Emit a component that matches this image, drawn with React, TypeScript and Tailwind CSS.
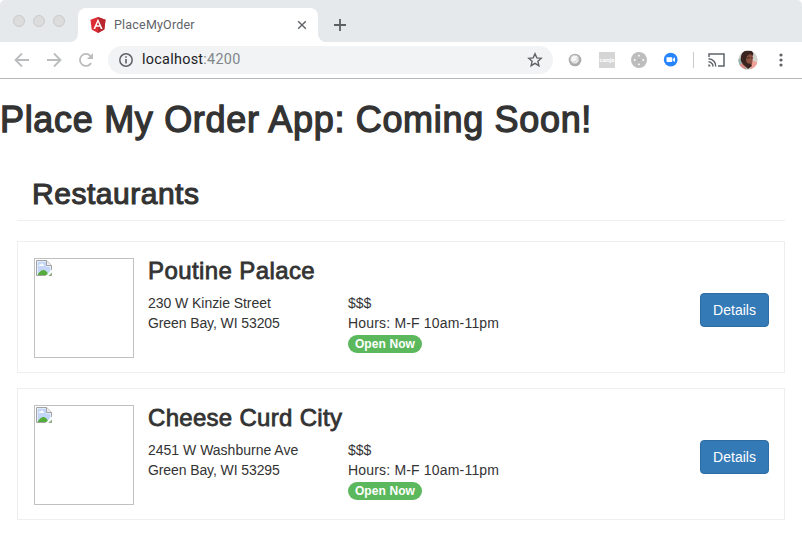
import React from "react";

type Restaurant = { name: string; street: string; city: string; nameTracking: string; streetTracking: string };

const restaurants: Restaurant[] = [
  { name: "Poutine Palace", street: "230 W Kinzie Street", city: "Green Bay, WI 53205", nameTracking: "tracking-[0.4px]", streetTracking: "tracking-[-0.05px]" },
  { name: "Cheese Curd City", street: "2451 W Washburne Ave", city: "Green Bay, WI 53295", nameTracking: "tracking-[0.3px]", streetTracking: "tracking-[0px]" },
];

function AngularLogo() {
  return (
    <svg width="16" height="18" viewBox="0 0 16 18" className="shrink-0">
      <path d="M8 1 15.5 3.7 14.3 13.5 8 17 1.7 13.5.5 3.7Z" fill="#dd2c35" />
      <path d="M8 1 15.5 3.7 14.3 13.5 8 17Z" fill="#b9262e" />
      <path d="M8 2.8 3.4 13h1.8l.9-2.3h3.8l.9 2.3h1.8ZM8 6.1l1.3 3.1H6.7Z" fill="#fff" fillRule="evenodd" />
    </svg>
  );
}

function BrokenImage() {
  return (
    <svg width="16" height="16" viewBox="0 0 16 16">
      <path d="M.5.5h10.2l4.8 4.8v10.2H.5Z" fill="#fff" stroke="#a3a3a3" />
      <path d="M1.5 1.5h8.7v5h4.3v8h-13Z" fill="#c4d6f8" />
      <path d="M3 6c-.4-1.2.8-1.9 1.6-1.3.5-1.6 2.7-1.3 2.8.1 1 0 1.1 1.2.3 1.2Z" fill="#fff" />
      <path d="M1.5 15c1.8-3.5 4.5-5.2 6.3-5 1.8.2 3.6 2 4.7 5Z" fill="#54ad3b" />
      <path d="M10.5.5v5h5" fill="#eee" stroke="#a3a3a3" />
      <path d="M16 9.6 9.4 16h2.9l3.7-3.6Z" fill="#fff" />
      <path d="M12.6 15.5h2.9v-2.7Z" fill="#54ad3b" opacity="0.55" />
    </svg>
  );
}

function BrowserChrome() {
  return (
    <header className="font-[Roboto,sans-serif]">
      <div className="flex h-[42px] overflow-hidden rounded-t-[5px] bg-[#e5e9ec]">
        <div className="flex w-[78px] shrink-0 gap-2 pl-[13px] pt-[15px]">
          <i className="size-3 rounded-full border border-[#c8cacb] bg-[#dcdcdc]" />
          <i className="size-3 rounded-full border border-[#c8cacb] bg-[#dcdcdc]" />
          <i className="size-3 rounded-full border border-[#c8cacb] bg-[#dcdcdc]" />
        </div>
        <div className="relative mt-2 flex h-[34px] w-60 items-center rounded-t-lg bg-white pl-3 pr-[11px]">
          <svg className="absolute -left-2 bottom-0" width="8" height="8"><path d="M8 0v8H0a8 8 0 0 0 8-8" fill="#fff" /></svg>
          <svg className="absolute -right-2 bottom-0" width="8" height="8"><path d="M0 0v8h8a8 8 0 0 1-8-8" fill="#fff" /></svg>
          <AngularLogo />
          <span className="ml-2 flex-1 text-[12.5px] leading-4 tracking-[0.2px] text-[#5f6368]">PlaceMyOrder</span>
          <svg width="10" height="10" viewBox="0 0 10 10"><path d="m1.2 1.2 7.6 7.6M8.8 1.2 1.2 8.8" stroke="#5f6368" strokeWidth="1.4" /></svg>
        </div>
        <svg className="ml-[15px] mt-[18px]" width="14" height="14"><path d="M7 1v12M1 7h12" stroke="#5b5f63" strokeWidth="1.8" /></svg>
      </div>
      <div className="flex h-[37px] items-center border-b border-[#b5b6b8] bg-white pl-[14px] pr-[13px]">
        <svg width="16" height="16" fill="none" stroke="#babcbe" strokeWidth="1.8"><path d="M15 8H2M8 1.5 1.5 8 8 14.5" /></svg>
        <svg className="ml-4" width="16" height="16" fill="none" stroke="#babcbe" strokeWidth="1.8"><path d="M1 8h13M8 1.5 14.5 8 8 14.5" /></svg>
        <svg className="ml-4" width="16" height="16"><path d="M13.1 11A6 6 0 1 1 12.3 3.8" fill="none" stroke="#babcbe" strokeWidth="1.8" /><path d="M15 1v6H9Z" fill="#babcbe" /></svg>
        <div className="ml-[14px] flex h-7 w-[445px] items-center rounded-full bg-[#f1f3f4] pl-[11px] pr-[10px]">
          <svg width="14" height="14" fill="none" stroke="#5f6368"><circle cx="7" cy="7" r="6.2" strokeWidth="1.5" /><path d="M7 6v4.5M7 3.2v1.6" strokeWidth="1.6" /></svg>
          <span className="ml-[9px] flex-1 text-[14.4px] leading-5 tracking-[0.28px] text-[#202124]">localhost<span className="text-[#80868b]">:4200</span></span>
          <svg width="16" height="16" viewBox="0 0 16 16"><path d="m8 1.8 1.8 4.1 4.4.4-3.3 3 1 4.4L8 11.4l-3.9 2.3 1-4.4-3.3-3 4.4-.4Z" fill="none" stroke="#5f6368" strokeWidth="1.4" /></svg>
        </div>
        <svg className="ml-[15px]" width="14" height="14"><circle cx="7" cy="7" r="6.3" fill="#aaa" /><circle cx="6.7" cy="6.3" r="4.2" fill="#f6f6f6" stroke="#c9c9c9" /><path d="M8.8 4.5 9.8 6 7 9H4.8" fill="none" stroke="#d0d0d0" /></svg>
        <span className="ml-[17px] flex size-4 items-center justify-center bg-[#d5d5d5] pb-px font-['Open_Sans',sans-serif] text-[6px] font-bold leading-none tracking-[-0.1px] text-white">canjs</span>
        <svg className="ml-4" width="16" height="16"><circle cx="8" cy="8" r="8" fill="#bdbdbd" /><g fill="#fff"><circle cx="8" cy="3.7" r=".9" /><circle cx="8" cy="12.3" r=".9" /><circle cx="3.7" cy="8" r=".9" /><circle cx="12.3" cy="8" r=".9" /></g><circle cx="8" cy="8" r="1.2" fill="#b2b2b2" /></svg>
        <svg className="ml-4" width="16" height="16"><circle cx="7.7" cy="7.7" r="6.9" fill="#2685fc" /><path d="M3.5 5.2h5.7v4.9H4.5q-1 0-1-1Zm6.3 1.7 2.2-1.6v4.8L9.8 8.6Z" fill="#fff" /></svg>
        <i className="ml-[14px] h-4 w-px bg-[#c8cacc]" />
        <svg className="ml-[14px]" width="17" height="14" fill="none" stroke="#5f6368" strokeWidth="1.5"><path d="M1 4V1h15v12h-6M.5 5.8A7.2 7.2 0 0 1 7.7 13.5M.5 8.8A4.5 4.5 0 0 1 5 13.5" /><path d="M.3 11.2A2.3 2.3 0 0 1 2.6 13.5H.3Z" fill="#5f6368" stroke="none" /></svg>
        <svg className="ml-[13px]" width="20" height="20" viewBox="0 0 20 20">
          <clipPath id="avatar"><circle cx="10" cy="10" r="9.7" /></clipPath>
          <g clipPath="url(#avatar)"><path d="M0 0h20v20H0Z" fill="#d4d2cd" /><path d="M0 9 5 8l4 12H0Z" fill="#93b5ad" /><path d="m14 10 6 3v7h-8Z" fill="#f0a19a" /><path d="m1 15 5-3 2 8H2Z" fill="#d88984" /><path d="M5 4 12 2l3 5-1 7-4 4-5-3-2-5Z" fill="#8a5140" /><path d="M3 11C2 5 5 0 10 1c4-1 6 1 5 5L12 4 9 6l-1 4 1 3 4 1 1 2-4 3-5-5Z" fill="#3a241f" /><path d="m9 8 3-.5m1 .5h1.5" stroke="#4b2922" /></g>
        </svg>
        <svg className="ml-5" width="6" height="16" fill="#5f6368"><circle cx="3" cy="3" r="1.6" /><circle cx="3" cy="8" r="1.6" /><circle cx="3" cy="13" r="1.6" /></svg>
      </div>
    </header>
  );
}

function RestaurantCard({ r }: { r: Restaurant }) {
  return (
    <article className="flex h-[132px] border border-[#eee] pl-4 pr-[15px] pt-4">
      <div className="size-[100px] shrink-0 border border-[#c0c0c0] p-px"><BrokenImage /></div>
      <div className="ml-[14px] w-[552px] shrink-0">
        <h3 className={`h-[26px] whitespace-nowrap text-[24px] leading-[26px] [-webkit-text-stroke:0.8px_#333] ${r.nameTracking}`}>{r.name}</h3>
        <div className="mt-[9px] flex">
          <address className="w-[200px] shrink-0 whitespace-nowrap text-[14px] not-italic leading-5">
            <span className={`block ${r.streetTracking}`}>{r.street}</span>
            <span className="block tracking-[-0.1px]">{r.city}</span>
          </address>
          <div className="text-[14px] leading-5">
            <p>$$$</p>
            <p className="tracking-[0.18px]">Hours: M-F 10am-11pm</p>
            <span className="mt-[2px] flex h-[18px] w-[74px] items-center justify-center rounded-full bg-[#5cb85c] text-[12px] font-bold leading-none tracking-[0.1px] text-white">Open Now</span>
          </div>
        </div>
      </div>
      <button className="mt-[35px] h-[34px] w-[69px] shrink-0 rounded border border-[#2e6da4] bg-[#337ab7] text-[14px] leading-5 text-white">Details</button>
    </article>
  );
}

export default function App() {
  return (
    <div className="h-[554px] w-[802px] overflow-hidden bg-white font-['Liberation_Sans',Arial,sans-serif] text-[#333]">
      <BrowserChrome />
      <main>
        <h1 className="mt-[21px] whitespace-nowrap text-[36px] leading-10 tracking-[0.68px] [-webkit-text-stroke:1.3px_#333]">Place My Order App: Coming Soon!</h1>
        <section className="ml-[17px] mt-[37px] w-[768px]">
          <h2 className="h-[44px] border-b border-[#eee] pl-[15px] text-[30px] leading-[33px] tracking-[0.52px] [-webkit-text-stroke:1.1px_#333]">Restaurants</h2>
          <div className="mt-5 flex flex-col gap-[15px]">
            {restaurants.map((r) => <RestaurantCard key={r.name} r={r} />)}
          </div>
        </section>
      </main>
    </div>
  );
}
